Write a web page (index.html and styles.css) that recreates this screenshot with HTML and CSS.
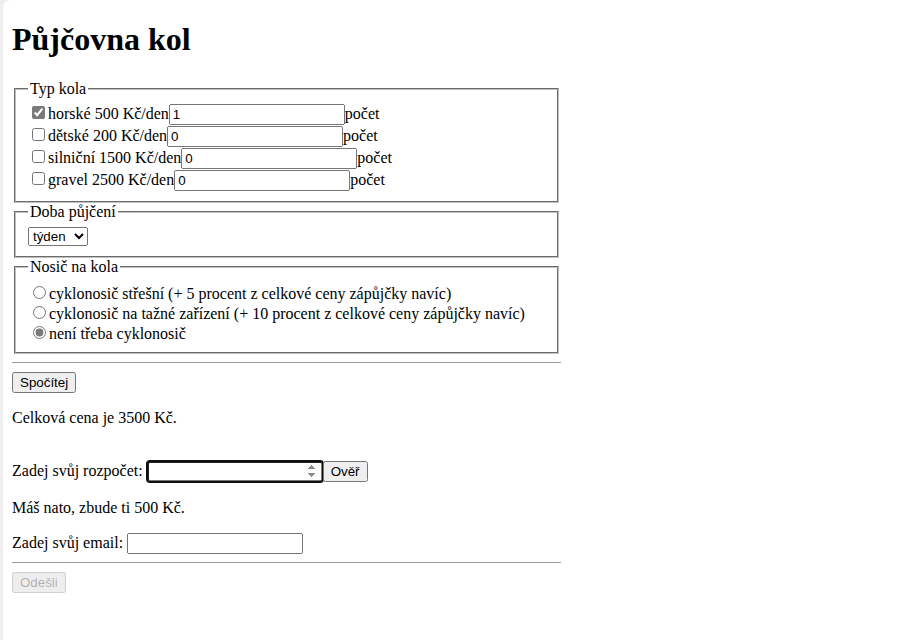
FILE: index.html
```html
<!DOCTYPE html>
<html lang="cs">
<head>
<meta charset="utf-8">
<title>Půjčovna kol</title>
<link rel="stylesheet" href="styles.css">
</head>
<body>
<div class="page">
<h1 class="title">Půjčovna kol</h1>
<form class="form">
<fieldset class="group">
<legend>Typ kola</legend>
<label><input type="checkbox" checked>horské 500 Kč/den</label><input type="text" class="field" value="1">počet<br>
<label><input type="checkbox">dětské 200 Kč/den</label><input type="text" class="field" value="0">počet<br>
<label><input type="checkbox">silniční 1500 Kč/den</label><input type="text" class="field" value="0">počet<br>
<label><input type="checkbox">gravel 2500 Kč/den</label><input type="text" class="field" value="0">počet
</fieldset>
<fieldset class="group">
<legend>Doba půjčení</legend>
<select class="choice"><option>den</option><option selected>týden</option><option>měsíc</option></select>
</fieldset>
<fieldset class="group group-radios">
<legend>Nosič na kola</legend>
<label><input type="radio" name="nosic">cyklonosič střešní (+ 5 procent z celkové ceny zápůjčky navíc)</label><br>
<label><input type="radio" name="nosic">cyklonosič na tažné zařízení (+ 10 procent z celkové ceny zápůjčky navíc)</label><br>
<label><input type="radio" name="nosic" checked>není třeba cyklonosič</label>
</fieldset>
<hr class="rule">
<button type="button" class="btn">Spočítej</button>
<p class="line result">Celková cena je 3500 Kč.</p>
<p class="line budget">Zadej svůj rozpočet: <input type="number" class="field focused"><button type="button" class="btn">Ověř</button></p>
<p class="line">Máš nato, zbude ti 500 Kč.</p>
<div class="line last">Zadej svůj email: <input type="email" class="field"></div>
<hr class="rule">
<button type="submit" class="btn" disabled>Odešli</button>
</form>
</div>
</body>
</html>
```
FILE: styles.css
```css
html {
  background: #efefef;
  margin: 0;
  padding: 0;
}
body {
  margin: 0 0 0 3px;
  padding: 0;
  background: #fff;
  border-top-left-radius: 8px;
  min-height: 100vh;
  font-family: "Liberation Serif", "Times New Roman", serif;
  font-size: 16px;
  color: #000;
  accent-color: #7a7a7a;
}
.page {
  padding: 0 9px 8px;
  width: 549px;
  display: flow-root;
}
.title {
  font-size: 32px;
  margin: 21.44px 0;
}
.form {
  margin: 0;
}
.group {
  margin: 0 2px;
  border: 2px groove #c0c0c0;
  padding: 5.6px 12px 10px;
}
.group-radios {
  padding-top: 7px;
  padding-bottom: 9px;
}
.group legend {
  padding: 0 2px;
}
.field {
  font-family: "Liberation Sans", Arial, sans-serif;
  font-size: 13.333px;
  box-sizing: border-box;
  width: 176px;
  height: 21px;
}
.choice {
  font-family: "Liberation Sans", Arial, sans-serif;
  font-size: 13.333px;
  box-sizing: border-box;
  width: 60px;
  height: 19px;
}
.btn {
  font-family: "Liberation Sans", Arial, sans-serif;
  font-size: 13.333px;
}
.focused {
  outline: 2px solid #101010;
  outline-offset: -1px;
  border-radius: 3px;
}
.focused::-webkit-inner-spin-button {
  opacity: 1;
}
.rule {
  margin: 8px 0 9px;
  border: 0;
  border-top: 1px solid #9a9a9a;
  height: 0;
}
.line {
  margin: 16px 0;
}
.result {
  margin-bottom: 34px;
}
.budget {
  margin-bottom: 17px;
}
.last {
  margin-bottom: 0;
}
```
